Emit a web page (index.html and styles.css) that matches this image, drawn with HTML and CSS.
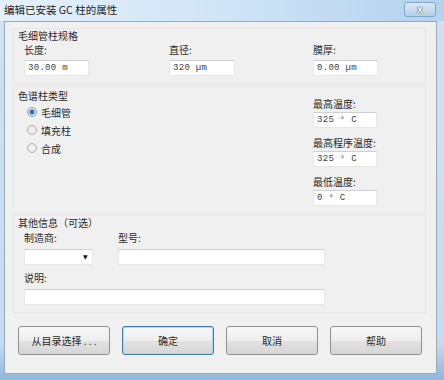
FILE: index.html
```html
<!DOCTYPE html>
<html lang="zh">
<head>
  <meta charset="UTF-8" />
  <title>编辑已安装 GC 柱的属性</title>
  <link rel="stylesheet" href="styles.css">
</head>
<body>
  <div class="window">
    <div class="titlebar">
      <span class="title">编辑已安装 GC 柱的属性</span>
      <span class="close">x</span>
    </div>

    <div class="panel">
      <div class="group spec">
        <div class="group-title">毛细管柱规格</div>
        <div class="spec-grid">
          <div class="field">
            <label>长度:</label>
            <div class="box w65">30.00 m</div>
          </div>
          <div class="field">
            <label>直径:</label>
            <div class="box w66">320 µm</div>
          </div>
          <div class="field">
            <label>膜厚:</label>
            <div class="box w65">0.00 µm</div>
          </div>
        </div>
      </div>

      <div class="group type">
        <div class="type-left">
          <div class="group-title">色谱柱类型</div>
          <div class="radio checked"><span class="dot"></span>毛细管</div>
          <div class="radio"><span class="dot"></span>填充柱</div>
          <div class="radio"><span class="dot"></span>合成</div>
        </div>
        <div class="type-right">
          <label>最高温度:</label>
          <div class="box w64">325 ° C</div>
          <label class="next">最高程序温度:</label>
          <div class="box w64">325 ° C</div>
          <label class="next">最低温度:</label>
          <div class="box w64">0 ° C</div>
        </div>
      </div>

      <div class="group other">
        <div class="group-title">其他信息（可选）</div>
        <div class="other-row">
          <div class="field maker">
            <label>制造商:</label>
            <div class="box select"><span class="arrow">▼</span></div>
          </div>
          <div class="field">
            <label>型号:</label>
            <div class="box w207"></div>
          </div>
        </div>
        <div class="field note">
          <label>说明:</label>
          <div class="box w301"></div>
        </div>
      </div>

      <div class="buttons">
        <button>从目录选择 . . .</button>
        <button class="default">确定</button>
        <button>取消</button>
        <button>帮助</button>
      </div>
    </div>
  </div>
</body>
</html>
```

FILE: styles.css
```css
body {
  margin: 0;
  font-family: "Noto Sans CJK SC", "Noto Sans", sans-serif;
  font-size: 10px;
  color: #2a2a2a;
}

.window {
  width: 444px;
  height: 380px;
  background: linear-gradient(180deg, #cfe2f4 0%, #c4dcf1 90%, #8fb6da 100%);
  overflow: hidden;
}

.titlebar {
  height: 21px;
  display: flex;
  align-items: flex-start;
  justify-content: space-between;
  background: linear-gradient(90deg, #e4f0fb 0%, #d3e6f7 45%, #b3d2ee 100%);
}

.title {
  padding-left: 4px;
  line-height: 20px;
  font-size: 10.5px;
  color: #1b1b1b;
}

.close {
  width: 30px;
  height: 13px;
  margin: 2px 8px 0 0;
  border: 1px solid #86a6c6;
  border-radius: 3px;
  background: linear-gradient(180deg, #d8e8f6, #b6d0e8);
  color: #fff;
  font-family: "Liberation Sans", sans-serif;
  font-weight: bold;
  font-size: 11px;
  line-height: 12px;
  text-align: center;
  text-shadow: 0 0 1px #333, 0 0 1px #333;
}

.panel {
  margin-left: 4px;
  width: 431px;
  height: 351px;
  background: #f0f0f0;
  border: 1px solid #9aa9b8;
}

.group {
  margin: 0 10px 0 8px;
  border: 1px solid #e7e7e7;
  padding: 0 0 7px 4px;
}

.group-title {
  line-height: 14px;
}

label {
  display: block;
  line-height: 14px;
}

.box {
  height: 16px;
  box-sizing: border-box;
  background: #fff;
  border: 1px solid #e8e8e8;
  border-top-color: #d0d0d0;
  font-family: "Liberation Mono", monospace;
  font-size: 9px;
  line-height: 14px;
  letter-spacing: 0.3px;
  padding-left: 3px;
  color: #444;
}

.w64 { width: 64px; }
.w65 { width: 65px; }
.w66 { width: 66px; }
.w207 { width: 207px; }
.w301 { width: 301px; }

/* 毛细管柱规格 */
.spec {
  margin-top: 6px;
}

.spec-grid {
  display: grid;
  grid-template-columns: 145px 144px auto;
  padding-left: 6px;
}

.spec .box {
  margin-top: 3px;
}

/* 色谱柱类型 */
.type {
  margin-top: 1px;
  display: grid;
  grid-template-columns: 295px auto;
}

.type-left .group-title {
  margin-top: 3px;
}

.radio {
  display: flex;
  align-items: center;
  height: 18px;
  padding-left: 9px;
}

.dot {
  width: 8px;
  height: 8px;
  border: 1px solid #b4b4b4;
  border-radius: 50%;
  background: radial-gradient(circle, #f6f6f6, #e0e0e0);
  margin-right: 4px;
}

.radio.checked .dot {
  border-color: #8aa3bb;
  background: radial-gradient(circle, #3a73a8 0 2px, #d6e4f0 3px);
}

.type-right {
  padding-top: 11px;
}

.type-right .box {
  margin-top: 1px;
}

.type-right .next {
  margin-top: 8px;
}

/* 其他信息 */
.other {
  margin-top: 1px;
}

.other-row {
  display: flex;
  padding-left: 6px;
  margin-top: 1px;
}

.maker {
  width: 94px;
}

.other .box {
  margin-top: 4px;
}

.select {
  width: 69px;
  position: relative;
}

.arrow {
  position: absolute;
  right: 4px;
  top: 0;
  font-family: "DejaVu Sans", sans-serif;
  font-size: 6px;
  color: #111;
}

.note {
  padding-left: 6px;
  margin-top: 6px;
}

/* buttons */
.buttons {
  display: flex;
  gap: 12px;
  margin: 13px 0 0 13px;
}

button {
  width: 92px;
  height: 29px;
  font-family: "Noto Sans CJK SC", "Noto Sans", sans-serif;
  font-size: 10px;
  color: #2a2a2a;
  border: 1px solid #909090;
  border-radius: 3px;
  background: linear-gradient(180deg, #f6f6f6 0%, #eeeeee 50%, #e2e2e2 51%, #d6d6d6 100%);
  padding: 0;
}

button.default {
  border-color: #3c7fb1;
  box-shadow: inset 0 0 0 1px #a9d8f3;
}
```
